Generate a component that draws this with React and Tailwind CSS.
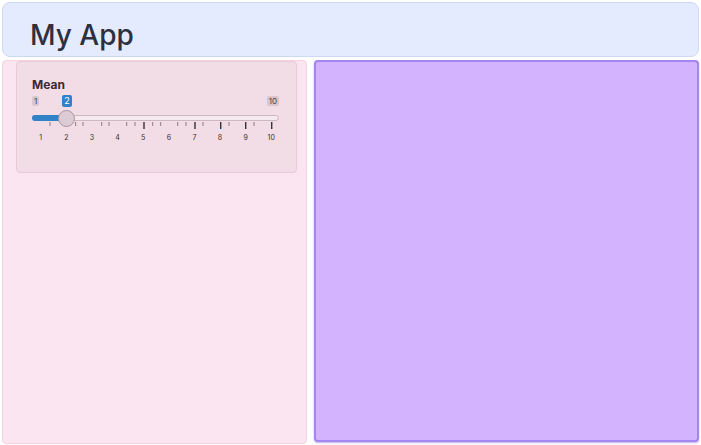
import React from 'react';

// tick marks under the track (x in px along a 248px track)
const TICKS = [
  { x: 18 }, { x: 43.7 }, { x: 51 }, { x: 69.7 }, { x: 77 }, { x: 94.7 }, { x: 103 },
  { x: 112, big: true }, { x: 120.7 }, { x: 128.7 }, { x: 145.7 }, { x: 154 },
  { x: 163, big: true }, { x: 171 }, { x: 188.7, big: true }, { x: 197 },
  { x: 213.7, big: true }, { x: 222 }, { x: 239.7, big: true },
];

const GRID = [1, 2, 3, 4, 5, 6, 7, 8, 9, 10];

function MeanSlider() {
  return (
    <div className="flex flex-col w-[248px]">
      {/* min / max labels, current value floats above */}
      <div className="relative flex justify-between h-[14px] pt-[1px] pr-[1px]">
        <span className="h-[10px] px-[2px] rounded-[2px] bg-black/10 text-[8px] leading-[10px] text-[#444]">1</span>
        <span className="absolute left-[30px] top-0 h-[12px] w-[10px] rounded-[2px] bg-[#3282c8] text-[9px] leading-[12px] text-center text-white">
          2
        </span>
        <span className="h-[10px] px-[2px] rounded-[2px] bg-black/10 text-[8px] leading-[10px] text-[#444]">10</span>
      </div>

      {/* track */}
      <div className="relative mt-[6px] h-[6px] w-[247px] rounded-full border border-[#cdb8c2] bg-[#f6e9ef]">
        <div className="absolute -left-px -top-px h-[6px] w-[35px] rounded-l-full bg-[#3282c8]" />
        <div className="absolute left-[25px] -top-[6px] h-[17px] w-[17px] rounded-full border border-[#a8979f] bg-[#dccad4]" />
      </div>

      {/* ticks */}
      <svg className="mt-px block" width="248" height="8">
        {TICKS.map((t) => (
          <line
            key={t.x}
            x1={t.x}
            x2={t.x}
            y1="0"
            y2={t.big ? 7 : 4}
            stroke={t.big ? '#333' : '#8a7c83'}
            strokeWidth={t.big ? 1.4 : 1}
          />
        ))}
      </svg>

      {/* grid labels */}
      <div className="grid grid-cols-10 w-[256px] -ml-[4px] mt-[3px]">
        {GRID.map((v) => (
          <span key={v} className="text-center text-[7px] leading-[9px] text-[#333]">
            {v}
          </span>
        ))}
      </div>
    </div>
  );
}

export default function App() {
  return (
    <div className="w-[701px] h-[445px] bg-white overflow-hidden font-['Inter','Noto_Sans',sans-serif] flex flex-col px-[2px] pt-[2px]">
      {/* header */}
      <header className="h-[55px] w-[697px] rounded-[8px] border border-[#cdd8f7] bg-[#e5ebfe] flex items-end pl-[27px] pb-[1px]">
        <h1 className="text-[28px] leading-[40px] font-medium text-[#2c3040]">My App</h1>
      </header>

      <div className="flex gap-[7px] mt-[3px]">
        {/* sidebar */}
        <aside className="w-[305px] h-[384px] rounded-[4px] border border-[#f6d3e2] bg-[#fbe5f1]">
          <div className="ml-[13px] w-[281px] h-[112px] rounded-[4px] border border-[#e7cbd8] bg-[#f2dce6] pl-[15px] pt-[15px]">
            <div className="text-[12px] leading-[16px] font-bold text-[#3a2b33]">Mean</div>
            <div className="mt-[2px]">
              <MeanSlider />
            </div>
          </div>
        </aside>

        {/* main */}
        <main className="w-[386px] h-[382px] rounded-[4px] border-2 border-[#a486f0] bg-[#d3b2fe] shadow-[0_1px_2px_rgba(110,80,200,0.45)]" />
      </div>
    </div>
  );
}
